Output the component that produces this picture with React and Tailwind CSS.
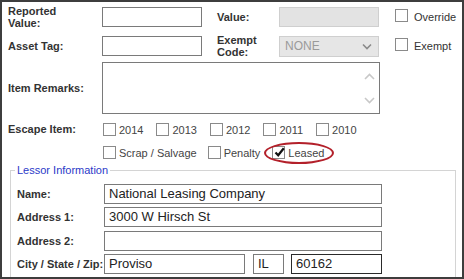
import React from "react";

const F = { fontFamily: '"Liberation Sans", Arial, sans-serif' };

function Box({ checked }) {
  return (
    <span className="relative inline-block w-[13px] h-[13px] shrink-0 border border-[#8a8a8a] bg-white">
      {checked && (
        <svg className="absolute left-[0px] top-[-1px]" width="13" height="13" viewBox="0 0 13 13">
          <path d="M2.5 6.5 L5.2 9.3 L10.8 2.2" fill="none" stroke="#111" strokeWidth="2.2" />
        </svg>
      )}
    </span>
  );
}

function Check({ label, checked }) {
  return (
    <span className="flex items-center gap-[3px] text-[11px] leading-[12px] text-[#444]">
      <Box checked={checked} />
      <span className="pt-[2px]">{label}</span>
    </span>
  );
}

function Input({ w, value, dark }) {
  return (
    <div
      className={`h-[20px] ${w} border ${dark ? "border-[#2a2a2a]" : "border-[#7a7a7a]"} bg-white px-[4px] text-[13px] leading-[18px] text-[#222] whitespace-nowrap overflow-hidden`}
    >
      {value}
    </div>
  );
}

const Lbl = ({ children, w }) => (
  <div className={`${w} shrink-0 text-[11px] leading-[12px] font-bold text-[#333]`}>{children}</div>
);

export default function App() {
  return (
    <div style={F} className="relative w-[464px] h-[279px] overflow-hidden bg-white border-2 border-[#3d3d3d] pl-[6px]">
      {/* Row 1 */}
      <div className="flex items-center h-[24px] mt-[3px]">
        <Lbl w="w-[94px]">Reported<br />Value:</Lbl>
        <Input w="w-[100px]" />
        <Lbl w="w-[62px] ml-[15px]">Value:</Lbl>
        <div className="w-[100px] h-[20px] border border-[#cfcfcf] bg-[#e3e3e3]" />
        <span className="flex items-center gap-[6px] ml-[16px] text-[11px] text-[#333]">
          <span className="-mt-[4px] flex"><Box /></span>
          <span>Override</span>
        </span>
      </div>
      {/* Row 2 */}
      <div className="flex items-center h-[24px] mt-[5px]">
        <Lbl w="w-[94px]">Asset Tag:</Lbl>
        <Input w="w-[100px]" />
        <Lbl w="w-[62px] ml-[15px]">Exempt<br />Code:</Lbl>
        <div className="relative w-[100px] h-[21px] border border-[#cfcfcf] bg-[#e6e6e6] pl-[5px] text-[12px] leading-[19px] text-[#9a9a9a]">
          NONE
          <svg className="absolute right-[6px] top-[6px]" width="10" height="7" viewBox="0 0 10 7">
            <path d="M1 1.5 L5 5.5 L9 1.5" fill="none" stroke="#8a8a8a" strokeWidth="1.6" />
          </svg>
        </div>
        <span className="flex items-center gap-[6px] ml-[16px] text-[11px] text-[#333]">
          <span className="-mt-[4px] flex"><Box /></span>
          <span>Exempt</span>
        </span>
      </div>
      {/* Remarks */}
      <div className="flex items-center h-[52px] mt-[4px]">
        <Lbl w="w-[94px]">Item Remarks:</Lbl>
        <div className="relative w-[278px] h-[52px] border border-[#7a7a7a] bg-white">
          <svg className="absolute right-[4px] top-[10px]" width="11" height="7" viewBox="0 0 11 7">
            <path d="M1 6 L5.5 1.5 L10 6" fill="none" stroke="#c8c8c8" strokeWidth="1.6" />
          </svg>
          <svg className="absolute right-[4px] bottom-[9px]" width="11" height="7" viewBox="0 0 11 7">
            <path d="M1 1 L5.5 5.5 L10 1" fill="none" stroke="#c8c8c8" strokeWidth="1.6" />
          </svg>
        </div>
      </div>
      {/* Escape item */}
      <div className="flex items-center h-[14px] mt-[8px]">
        <Lbl w="w-[95px]">Escape Item:</Lbl>
        <div className="flex items-center gap-[13px]">
          <Check label="2014" />
          <Check label="2013" />
          <Check label="2012" />
          <Check label="2011" />
          <Check label="2010" />
        </div>
      </div>
      <div className="flex items-center h-[14px] mt-[9px] pl-[95px]">
        <div className="flex items-center gap-[11px]">
          <Check label="Scrap / Salvage" />
          <Check label="Penalty" />
          <span className="ml-[1px]"><Check label="Leased" checked /></span>
        </div>
      </div>
      {/* ellipse highlight */}
      <div className="absolute left-[262px] top-[140px] w-[70px] h-[22px] rounded-[50%] border-2 border-[#b3202a]" />
      {/* Fieldset */}
      <fieldset className="ml-[2px] mt-[5px] w-[446px] h-[140px] border border-[#d4d4d4] pl-[6px]">
        <legend className="-ml-[2px] px-[2px] text-[11px] leading-[12px] text-[#2b3ac8]">Lessor Information</legend>
        <div className="mt-[8px] flex items-center">
          <Lbl w="w-[87px]">Name:</Lbl>
          <Input w="w-[278px]" value="National Leasing Company" />
        </div>
        <div className="mt-[3px] flex items-center">
          <Lbl w="w-[87px]">Address 1:</Lbl>
          <Input w="w-[278px]" value="3000 W Hirsch St" />
        </div>
        <div className="mt-[4px] flex items-center">
          <Lbl w="w-[87px]">Address 2:</Lbl>
          <Input w="w-[278px]" />
        </div>
        <div className="mt-[3px] flex items-center">
          <Lbl w="w-[87px]">City / State / Zip:</Lbl>
          <Input w="w-[141px]" value="Proviso" />
          <div className="ml-[8px]"><Input w="w-[31px]" value="IL" /></div>
          <div className="ml-[7px]"><Input w="w-[91px]" value="60162" dark /></div>
        </div>
      </fieldset>
    </div>
  );
}
